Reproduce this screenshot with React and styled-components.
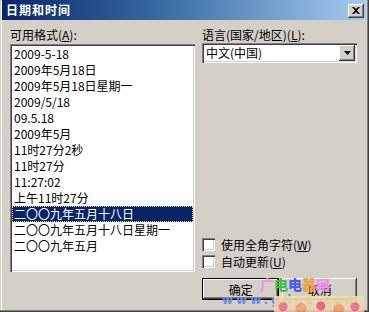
import React from 'react';
import styled, { createGlobalStyle } from 'styled-components';

const GlobalStyle = createGlobalStyle`
  html, body {
    margin: 0;
    padding: 0;
    background: #d4d0c8;
  }
  * {
    box-sizing: border-box;
  }
`;

const FONT = `"Noto Sans CJK SC", "Noto Sans", sans-serif`;

/* Classic dialog frame: raised 3D edge, title bar cropped at the top */
const Frame = styled.div`
  position: relative;
  width: 369px;
  height: 312px;
  background: #d4d0c8;
  padding: 0 3px 3px 2px;
  font-family: ${FONT};
  font-size: 12px;
  color: #000;
  box-shadow:
    inset -1px -1px #404040,
    inset -2px -2px #808080,
    inset 1px 1px #d4d0c8,
    inset 2px 2px #ffffff;
  overflow: hidden;
`;

const TitleBar = styled.div`
  height: 20px;
  display: flex;
  align-items: center;
  justify-content: space-between;
  padding: 0 2px 0 4px;
  background: linear-gradient(to right, #0a246a 0%, #3a6ea5 45%, #a6caf0 100%);
`;

const Title = styled.span`
  color: #fff;
  font-weight: 700;
  font-size: 12px;
  line-height: 14px;
  letter-spacing: 1px;
`;

/* shared 3D raised look for buttons */
const raised = `
  background: #d4d0c8;
  box-shadow:
    inset -1px -1px #404040,
    inset 1px 1px #ffffff,
    inset -2px -2px #808080,
    inset 2px 2px #d4d0c8;
`;

const CloseButton = styled.div`
  ${raised}
  width: 16px;
  height: 14px;
  display: flex;
  align-items: center;
  justify-content: center;
  margin-top: 1px;
`;

const Body = styled.div`
  display: flex;
  gap: 7px;
  padding: 8px 9px 0 8px;
  height: 289px;
`;

const LeftColumn = styled.div`
  width: 185px;
  display: flex;
  flex-direction: column;
`;

const RightColumn = styled.div`
  width: 155px;
  display: flex;
  flex-direction: column;
`;

const Label = styled.div`
  height: 14px;
  line-height: 14px;
  white-space: nowrap;
  margin-bottom: ${({ $gap }) => $gap}px;
`;

const Key = styled.span`
  text-decoration: underline;
`;

const sunken = `
  background: #fff;
  box-shadow:
    inset 1px 1px #808080,
    inset 2px 2px #404040,
    inset -1px -1px #ffffff,
    inset -2px -2px #d4d0c8;
`;

const ListBox = styled.div`
  ${sunken}
  height: 228px;
  padding: 2px;
  display: flex;
  flex-direction: column;
`;

const ListItem = styled.div`
  height: 16px;
  line-height: 16px;
  padding-left: 2px;
  white-space: nowrap;
  background: ${({ $selected }) => ($selected ? '#0a246a' : 'transparent')};
  color: ${({ $selected }) => ($selected ? '#fff' : '#000')};
  outline: ${({ $selected }) => ($selected ? '1px dotted #f0d060' : 'none')};
  outline-offset: -1px;
`;

const Combo = styled.div`
  ${sunken}
  height: 20px;
  display: flex;
  align-items: center;
  justify-content: space-between;
  padding: 2px;
`;

const ComboText = styled.span`
  padding-left: 2px;
  line-height: 16px;
`;

const DropButton = styled.div`
  ${raised}
  width: 16px;
  height: 16px;
  display: flex;
  align-items: center;
  justify-content: center;
`;

const Spacer = styled.div`
  flex: 1;
`;

const CheckRow = styled.div`
  display: flex;
  align-items: center;
  gap: 6px;
  height: 13px;
  margin-bottom: 4px;
  white-space: nowrap;
`;

const CheckBox = styled.div`
  ${sunken}
  width: 13px;
  height: 13px;
  flex: none;
`;

const ButtonRow = styled.div`
  display: flex;
  gap: 3px;
  margin-top: 6px;
  margin-bottom: 9px;
`;

const PushButton = styled.div`
  ${raised}
  width: ${({ $w }) => $w}px;
  height: 22px;
  display: flex;
  align-items: center;
  justify-content: center;
  ${({ $default }) =>
    $default &&
    `box-shadow:
      inset 0 0 0 1px #000,
      inset -2px -2px #404040,
      inset 2px 2px #ffffff,
      inset -3px -3px #808080;`}
`;

/* site watermark laid over the buttons */
const Watermark = styled.div`
  position: absolute;
  left: 222px;
  top: 276px;
  width: 147px;
  height: 36px;
  pointer-events: none;
`;

const MarkTitle = styled.div`
  display: flex;
  margin-left: 38px;
  font-weight: 900;
  font-size: 14px;
  line-height: 16px;
`;

const MarkChar = styled.span`
  color: ${({ $c }) => $c};
  width: 14px;
`;

const MarkUrl = styled.div`
  margin-top: 2px;
  color: #6a8ee8;
  font-family: "DejaVu Sans", sans-serif;
  font-weight: 700;
  font-size: 12px;
  letter-spacing: 3px;
  line-height: 12px;
  white-space: nowrap;
`;

const MarkFlowers = styled.div`
  position: absolute;
  left: 52px;
  top: 20px;
  width: 90px;
  height: 18px;
  opacity: 0.85;
  background:
    radial-gradient(circle at 10% 60%, #f06a8a 0 4px, transparent 5px),
    radial-gradient(circle at 30% 70%, #f4a070 0 5px, transparent 6px),
    radial-gradient(circle at 52% 55%, #e85a7a 0 4px, transparent 5px),
    radial-gradient(circle at 72% 75%, #f29a6a 0 5px, transparent 6px),
    radial-gradient(circle at 90% 60%, #ec6a8c 0 4px, transparent 5px),
    linear-gradient(#f0e4a0, #f4c8b8);
`;

const formats = [
  '2009-5-18',
  '2009年5月18日',
  '2009年5月18日星期一',
  '2009/5/18',
  '09.5.18',
  '2009年5月',
  '11时27分2秒',
  '11时27分',
  '11:27:02',
  '上午11时27分',
  '二〇〇九年五月十八日',
  '二〇〇九年五月十八日星期一',
  '二〇〇九年五月',
];

const App = () => (
  <>
    <GlobalStyle />
    <Frame>
      <TitleBar>
        <Title>日期和时间</Title>
        <CloseButton>
          <svg width="8" height="7" viewBox="0 0 8 7">
            <path d="M0 0h2l2 2 2-2h2L5 3.5 8 7H6L4 5 2 7H0l3-3.5z" fill="#000" />
          </svg>
        </CloseButton>
      </TitleBar>

      <Body>
        <LeftColumn>
          <Label $gap={2}>
            可用格式(<Key>A</Key>):
          </Label>
          <ListBox>
            {formats.map((f, i) => (
              <ListItem key={f} $selected={i === 10}>
                {f}
              </ListItem>
            ))}
          </ListBox>
        </LeftColumn>

        <RightColumn>
          <Label $gap={1}>
            语言(国家/地区)(<Key>L</Key>):
          </Label>
          <Combo>
            <ComboText>中文(中国)</ComboText>
            <DropButton>
              <svg width="7" height="4" viewBox="0 0 7 4">
                <path d="M0 0h7L3.5 4z" fill="#000" />
              </svg>
            </DropButton>
          </Combo>
          <Spacer />
          <CheckRow>
            <CheckBox />
            <span>
              使用全角字符(<Key>W</Key>)
            </span>
          </CheckRow>
          <CheckRow>
            <CheckBox />
            <span>
              自动更新(<Key>U</Key>)
            </span>
          </CheckRow>
          <ButtonRow>
            <PushButton $w={78} $default>
              确定
            </PushButton>
            <PushButton $w={75}>取消</PushButton>
          </ButtonRow>
        </RightColumn>
      </Body>

      <Watermark>
        <MarkFlowers />
        <MarkTitle>
          <MarkChar $c="#f090f0">广</MarkChar>
          <MarkChar $c="#40c040">电</MarkChar>
          <MarkChar $c="#4a5cf0">电</MarkChar>
          <MarkChar $c="#f0a040">器</MarkChar>
          <MarkChar $c="#f090f0">网</MarkChar>
        </MarkTitle>
        <MarkUrl>www.gdgz.com</MarkUrl>
      </Watermark>
    </Frame>
  </>
);

export default App;
